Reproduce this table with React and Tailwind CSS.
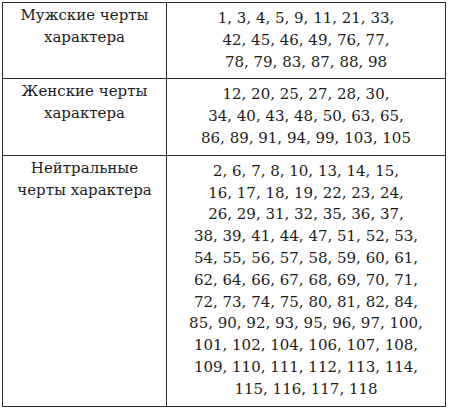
import React from "react";

const rows = [
  {
    label: ["Мужские черты", "характера"],
    nums: [
      "1, 3, 4, 5, 9, 11, 21, 33,",
      "42, 45, 46, 49, 76, 77,",
      "78, 79, 83, 87, 88, 98",
    ],
  },
  {
    label: ["Женские черты", "характера"],
    nums: [
      "12, 20, 25, 27, 28, 30,",
      "34, 40, 43, 48, 50, 63, 65,",
      "86, 89, 91, 94, 99, 103, 105",
    ],
  },
  {
    label: ["Нейтральные", "черты характера"],
    nums: [
      "2, 6, 7, 8, 10, 13, 14, 15,",
      "16, 17, 18, 19, 22, 23, 24,",
      "26, 29, 31, 32, 35, 36, 37,",
      "38, 39, 41, 44, 47, 51, 52, 53,",
      "54, 55, 56, 57, 58, 59, 60, 61,",
      "62, 64, 66, 67, 68, 69, 70, 71,",
      "72, 73, 74, 75, 80, 81, 82, 84,",
      "85, 90, 92, 93, 95, 96, 97, 100,",
      "101, 102, 104, 106, 107, 108,",
      "109, 110, 111, 112, 113, 114,",
      "115, 116, 117, 118",
    ],
  },
];

export default function App() {
  return (
    <div className="w-[449px] h-[410px] bg-white pt-[2px] pl-[2px]">
      <div className="w-[444px] border border-[#2a2a2a] font-['DejaVu_Serif',serif] text-[15px] leading-[21.8px] text-[#1c1c1c]">
        {rows.map((row, i) => (
          <div
            key={i}
            className={`grid grid-cols-[164px_1fr] ${i > 0 ? "border-t border-[#2a2a2a]" : ""}`}
          >
            <div className="border-r border-[#2a2a2a] text-center pt-[2px] pb-[4px]">
              {row.label.map((l) => (
                <div key={l}>{l}</div>
              ))}
            </div>
            <div className="text-center pt-[5px] pb-[5px]">
              {row.nums.map((n) => (
                <div key={n}>{n}</div>
              ))}
            </div>
          </div>
        ))}
      </div>
    </div>
  );
}
